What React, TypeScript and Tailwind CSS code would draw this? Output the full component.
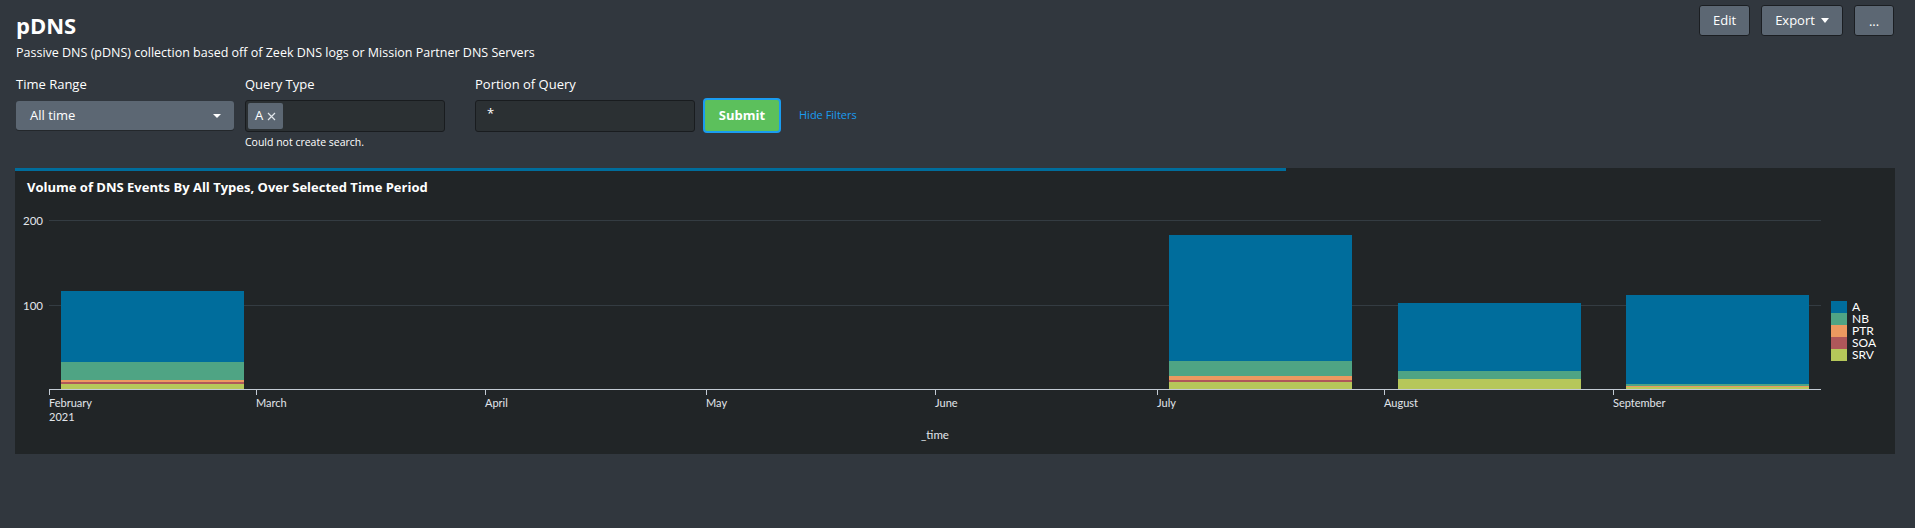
import React from 'react';

const COLORS: Record<string, string> = {
  A: '#006d9c',
  NB: '#4fa484',
  PTR: '#ec9960',
  SOA: '#af575a',
  SRV: '#b6c75a',
};

// segments: [type, topY, bottomY] in chart coords (baseline = 188)
const bars = [
  { x: 46, w: 183, segs: [['A', 90, 161], ['NB', 161, 179], ['PTR', 179, 181], ['SOA', 181, 183], ['SRV', 183, 188]] },
  { x: 1154, w: 183, segs: [['A', 34, 160], ['NB', 160, 175], ['PTR', 175, 179], ['SOA', 179, 181], ['SRV', 181, 188]] },
  { x: 1383, w: 183, segs: [['A', 102, 170], ['NB', 170, 178], ['SRV', 178, 188]] },
  { x: 1611, w: 183, segs: [['A', 94, 183], ['NB', 183, 185], ['PTR', 185, 186], ['SRV', 186, 188]] },
] as const;

const ticks = [
  { x: 34, label: 'February', sub: '2021' },
  { x: 241, label: 'March' },
  { x: 470, label: 'April' },
  { x: 691, label: 'May' },
  { x: 920, label: 'June' },
  { x: 1142, label: 'July' },
  { x: 1369, label: 'August' },
  { x: 1598, label: 'September' },
];

const chartFont = { fontFamily: 'Lato, "Liberation Sans", sans-serif' };
const uiFont = { fontFamily: '"Open Sans", "Liberation Sans", sans-serif' };

function Chart() {
  return (
    <svg width="1880" height="253" className="block" style={chartFont}>
      <line x1="34" y1="19.5" x2="1806" y2="19.5" stroke="#343c42" strokeWidth="1" />
      <line x1="34" y1="104.5" x2="1806" y2="104.5" stroke="#343c42" strokeWidth="1" />
      <text x="28" y="23.5" textAnchor="end" fill="#e1e6eb" fontSize="11.5">200</text>
      <text x="28" y="108.5" textAnchor="end" fill="#e1e6eb" fontSize="11.5">100</text>
      {bars.map((b, i) => (
        <g key={i}>
          {b.segs.map(([t, y1, y2]) => (
            <rect key={t} x={b.x} y={y1} width={b.w} height={y2 - y1} fill={COLORS[t]} />
          ))}
        </g>
      ))}
      <line x1="34" y1="188.5" x2="1806" y2="188.5" stroke="#c3cbd4" strokeWidth="1" />
      {ticks.map((t) => (
        <g key={t.label}>
          <line x1={t.x + 0.5} y1="188" x2={t.x + 0.5} y2="194" stroke="#c3cbd4" strokeWidth="1" />
          <text x={t.x} y="206" fill="#e1e6eb" fontSize="11">{t.label}</text>
          {t.sub && <text x={t.x} y="220" fill="#e1e6eb" fontSize="11">{t.sub}</text>}
        </g>
      ))}
      <text x="920" y="238" textAnchor="middle" fill="#e1e6eb" fontSize="11.5">_time</text>
      {Object.keys(COLORS).map((k, i) => (
        <g key={k}>
          <rect x="1816" y={100 + i * 12} width="16" height="12" fill={COLORS[k]} />
          <text x="1837" y={110 + i * 12} fill="#ffffff" fontSize="12">{k}</text>
        </g>
      ))}
    </svg>
  );
}

export default function App() {
  return (
    <div className="min-h-[528px] bg-[#31373e] text-white" style={uiFont}>
      <div className="flex justify-between pl-4 pr-[21px]">
        <div className="pt-[11px]">
          <h1 className="text-[22px] font-bold leading-[28px]">pDNS</h1>
          <p className="mt-[5px] text-[12.5px] leading-[18px]">
            Passive DNS (pDNS) collection based off of Zeek DNS logs or Mission Partner DNS Servers
          </p>
        </div>
        <div className="flex gap-[11px] pt-[5px] h-[36px] text-[13px]">
          <button className="h-[31px] w-[51px] rounded-[3px] border border-[#1b1e22] bg-[#5c6773]">Edit</button>
          <button className="h-[31px] w-[82px] rounded-[3px] border border-[#1b1e22] bg-[#5c6773] flex items-center justify-center gap-[6px]">
            Export
            <span className="inline-block w-0 h-0 border-l-[4px] border-r-[4px] border-t-[5px] border-l-transparent border-r-transparent border-t-white" />
          </button>
          <button className="h-[31px] w-[40px] rounded-[3px] border border-[#1b1e22] bg-[#5c6773] leading-[20px]">...</button>
        </div>
      </div>

      <div className="flex pl-4 mt-[13px] text-[13px]">
        <div className="w-[218px] mr-[11px]">
          <div className="leading-[18px]">Time Range</div>
          <div className="mt-[8px] h-[29px] rounded-[3px] bg-[#5c6773] flex items-center justify-between pl-[14px] pr-[13px] shadow-[0_1px_0_#23272b]">
            <span>All time</span>
            <span className="inline-block w-0 h-0 border-l-[4px] border-r-[4px] border-t-[4px] border-l-transparent border-r-transparent border-t-white" />
          </div>
        </div>
        <div className="w-[200px] mr-[30px]">
          <div className="leading-[18px]">Query Type</div>
          <div className="mt-[7px] h-[32px] rounded-[3px] bg-[#2b3033] border border-[#191c1f] flex items-center pl-[2px]">
            <span className="h-[26px] px-[7px] rounded-[2px] bg-[#5c6773] flex items-center gap-[4px]">
              A
              <svg width="9" height="9" viewBox="0 0 9 9"><path d="M1 1 L8 8 M8 1 L1 8" stroke="#e1e6eb" strokeWidth="1.2" /></svg>
            </span>
          </div>
          <div className="text-[10.5px] leading-[14px] mt-[3px]">Could not create search.</div>
        </div>
        <div className="w-[220px] mr-[8px]">
          <div className="leading-[18px]">Portion of Query</div>
          <div className="mt-[7px] h-[32px] rounded-[3px] bg-[#2b3033] border border-[#191c1f] flex items-center pl-[11px] pb-[4px]">
            *
          </div>
        </div>
        <div className="pt-[23px] flex items-start">
          <button className="h-[35px] w-[78px] rounded-[4px] border-2 border-[#1a9cf0] bg-[#5cc05c] font-bold text-[13px]">
            Submit
          </button>
          <span className="ml-[18px] mt-[9px] text-[11px] text-[#1a9cf0] leading-[16px]">Hide Filters</span>
        </div>
      </div>

      <div className="ml-[15px] mr-[20px] mt-[19px] bg-[#212527] h-[286px]">
        <div className="h-[3px] w-[1271px] bg-[#006d9c]" />
        <div className="h-[30px] pt-[9px] pl-[12px] text-[13px] font-bold leading-[14px]">
          Volume of DNS Events By All Types, Over Selected Time Period
        </div>
        <Chart />
      </div>
    </div>
  );
}
